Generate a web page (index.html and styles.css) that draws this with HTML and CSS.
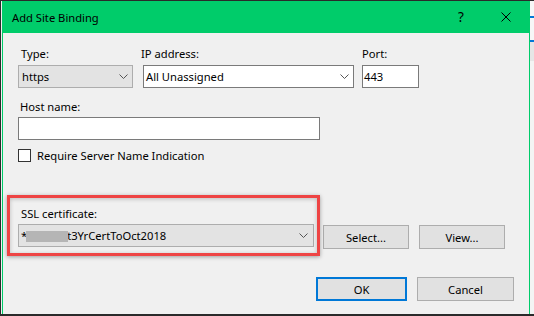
FILE: index.html
```html
<!DOCTYPE html>
<html lang="en">
<head>
<meta charset="utf-8">
<title>Add Site Binding</title>
<link rel="stylesheet" href="styles.css">
</head>
<body>
<div class="screen">
  <div class="dialog">
    <div class="titlebar">
      <span class="title">Add Site Binding</span>
      <span class="tb-btn help">?</span>
      <span class="tb-btn close">
        <svg width="10" height="10" viewBox="0 0 10 10"><path d="M0.5 0.5L9.5 9.5M9.5 0.5L0.5 9.5" stroke="#000" stroke-width="1" fill="none"/></svg>
      </span>
    </div>
    <div class="body">
      <div class="row1">
        <div class="field f-type">
          <span class="lbl lbl-type">Type:</span>
          <div class="combo combo-gray w-type">
            <span class="combo-text">https</span>
            <svg class="chev" width="9" height="5" viewBox="0 0 9 5"><path d="M0.5 0.5L4.5 4.5L8.5 0.5" fill="none" stroke="#555" stroke-width="1"/></svg>
          </div>
        </div>
        <div class="field f-ip">
          <span class="lbl lbl-ip">IP address:</span>
          <div class="combo combo-white w-ip">
            <span class="combo-text">All Unassigned</span>
            <svg class="chev" width="9" height="5" viewBox="0 0 9 5"><path d="M0.5 0.5L4.5 4.5L8.5 0.5" fill="none" stroke="#555" stroke-width="1"/></svg>
          </div>
        </div>
        <div class="field f-port">
          <span class="lbl lbl-port">Port:</span>
          <div class="textbox w-port">443</div>
        </div>
      </div>
      <div class="field host">
        <span class="lbl lbl-host">Host name:</span>
        <div class="textbox w-host"></div>
      </div>
      <div class="check-row">
        <span class="checkbox"></span>
        <span class="check-label">Require Server Name Indication</span>
      </div>
      <div class="ssl-row">
        <div class="field cert-group">
          <span class="lbl lbl-ssl">SSL certificate:</span>
          <div class="combo combo-gray w-cert">
            <span class="combo-text">*<span class="redact"></span>t3YrCertToOct2018</span>
            <svg class="chev" width="9" height="5" viewBox="0 0 9 5"><path d="M0.5 0.5L4.5 4.5L8.5 0.5" fill="none" stroke="#555" stroke-width="1"/></svg>
          </div>
        </div>
        <div class="btn btn-select">Select...</div>
        <div class="btn btn-view">View...</div>
      </div>
      <div class="footer">
        <div class="btn btn-ok">OK</div>
        <div class="btn btn-cancel">Cancel</div>
      </div>
    </div>
  </div>
  <div class="backdrop"></div>
</div>
</body>
</html>
```
FILE: styles.css
```css
* { box-sizing: border-box; }
html, body { margin: 0; padding: 0; }
body {
  font-family: "Noto Sans", "Open Sans", sans-serif;
  font-size: 11.2px;
  line-height: 15px;
  color: #000;
  background: #f0f0f0;
}
.screen {
  width: 534px;
  height: 316px;
  border-top: 1px solid #2a2a2a;
  border-left: 1px solid #2a2a2a;
  border-bottom: 2px solid #2a2a2a;
  display: flex;
  background: #f0f0f0;
  overflow: hidden;
}
.dialog {
  width: 528px;
  margin-left: 1px;
  border-left: 1px solid #00cc6a;
  border-right: 1px solid #00cc6a;
  background: #f0f0f0;
  display: flex;
  flex-direction: column;
}
.titlebar {
  height: 32px;
  flex: none;
  background: #00cc6a;
  display: flex;
  align-items: center;
  padding-left: 9px;
}
.title { flex: 1; }
.tb-btn {
  width: 46px;
  height: 32px;
  display: flex;
  align-items: center;
  justify-content: center;
}
.help { font-size: 13.5px; padding-left: 2px; }
.close svg { display: block; }
.body {
  padding: 13px 15px 0 15px;
  display: flex;
  flex-direction: column;
}
.row1 { display: flex; }
.field { display: flex; flex-direction: column; gap: 4px; }
.f-type { margin-right: 10px; }
.f-ip { margin-right: 8px; }
.lbl-type, .lbl-ssl { padding-left: 3px; }
.lbl-host { padding-left: 2px; }
.lbl-ip { margin-left: -2px; }
.combo {
  height: 23px;
  display: flex;
  align-items: center;
  border: 1px solid #adadad;
  padding: 0 4px 0 3px;
  white-space: nowrap;
}
.combo-gray { background: #e3e3e3; border-color: #adadad; }
.combo-white { background: #fff; border-color: #7a7a7a; padding-left: 2px; }
.combo-text { flex: 1; }
.chev { display: block; flex: none; }
.w-type { width: 115px; }
.w-ip { width: 211px; }
.w-cert { width: 296px; padding-right: 5px; padding-left: 2px; }
.textbox {
  height: 23px;
  background: #fff;
  border: 1px solid #7a7a7a;
  padding-left: 1px;
  display: flex;
  align-items: center;
}
.w-port { width: 57px; }
.host { margin-top: 11px; gap: 3px; }
.w-host { width: 302px; }
.check-row {
  margin-top: 8px;
  height: 15px;
  display: flex;
  align-items: center;
  gap: 6px;
}
.checkbox {
  width: 13px;
  height: 13px;
  border: 1px solid #333;
  background: #fff;
}
.ssl-row {
  margin-top: 43px;
  display: flex;
  align-items: flex-start;
}
.cert-group { position: relative; gap: 3px; }
.cert-group::after {
  content: "";
  position: absolute;
  top: -11px;
  left: -11px;
  right: -6px;
  bottom: -9px;
  border: 3px solid #ee4444;
  box-shadow: 0 1px 4px rgba(0, 0, 0, 0.35), inset 0 1px 4px rgba(0, 0, 0, 0.22);
  pointer-events: none;
}
.redact {
  display: inline-block;
  position: relative;
  z-index: 1;
  width: 42px;
  height: 11px;
  background: #b5b5b5;
  vertical-align: -2px;
  margin-left: -1px;
  margin-right: -1px;
}
.btn {
  height: 24px;
  display: flex;
  align-items: center;
  justify-content: center;
  background: #e1e1e1;
  border: 1px solid #adadad;
}
.btn-select { width: 86px; margin-top: 19px; margin-left: 9px; }
.btn-view { width: 86px; margin-top: 19px; margin-left: 10px; }
.footer {
  margin-top: 28px;
  display: flex;
  justify-content: flex-end;
  gap: 10px;
}
.btn-ok { width: 91px; border: 2px solid #0078d7; }
.btn-cancel { width: 97px; }
.backdrop {
  flex: 1;
  background: linear-gradient(to bottom, #f7f7f7 0 15px, #0078d7 15px 17px, #f7f7f7 17px 39px, #0078d7 39px 41px, #e6e6e6 41px 60px, #f4f4f4 60px);
}
```
